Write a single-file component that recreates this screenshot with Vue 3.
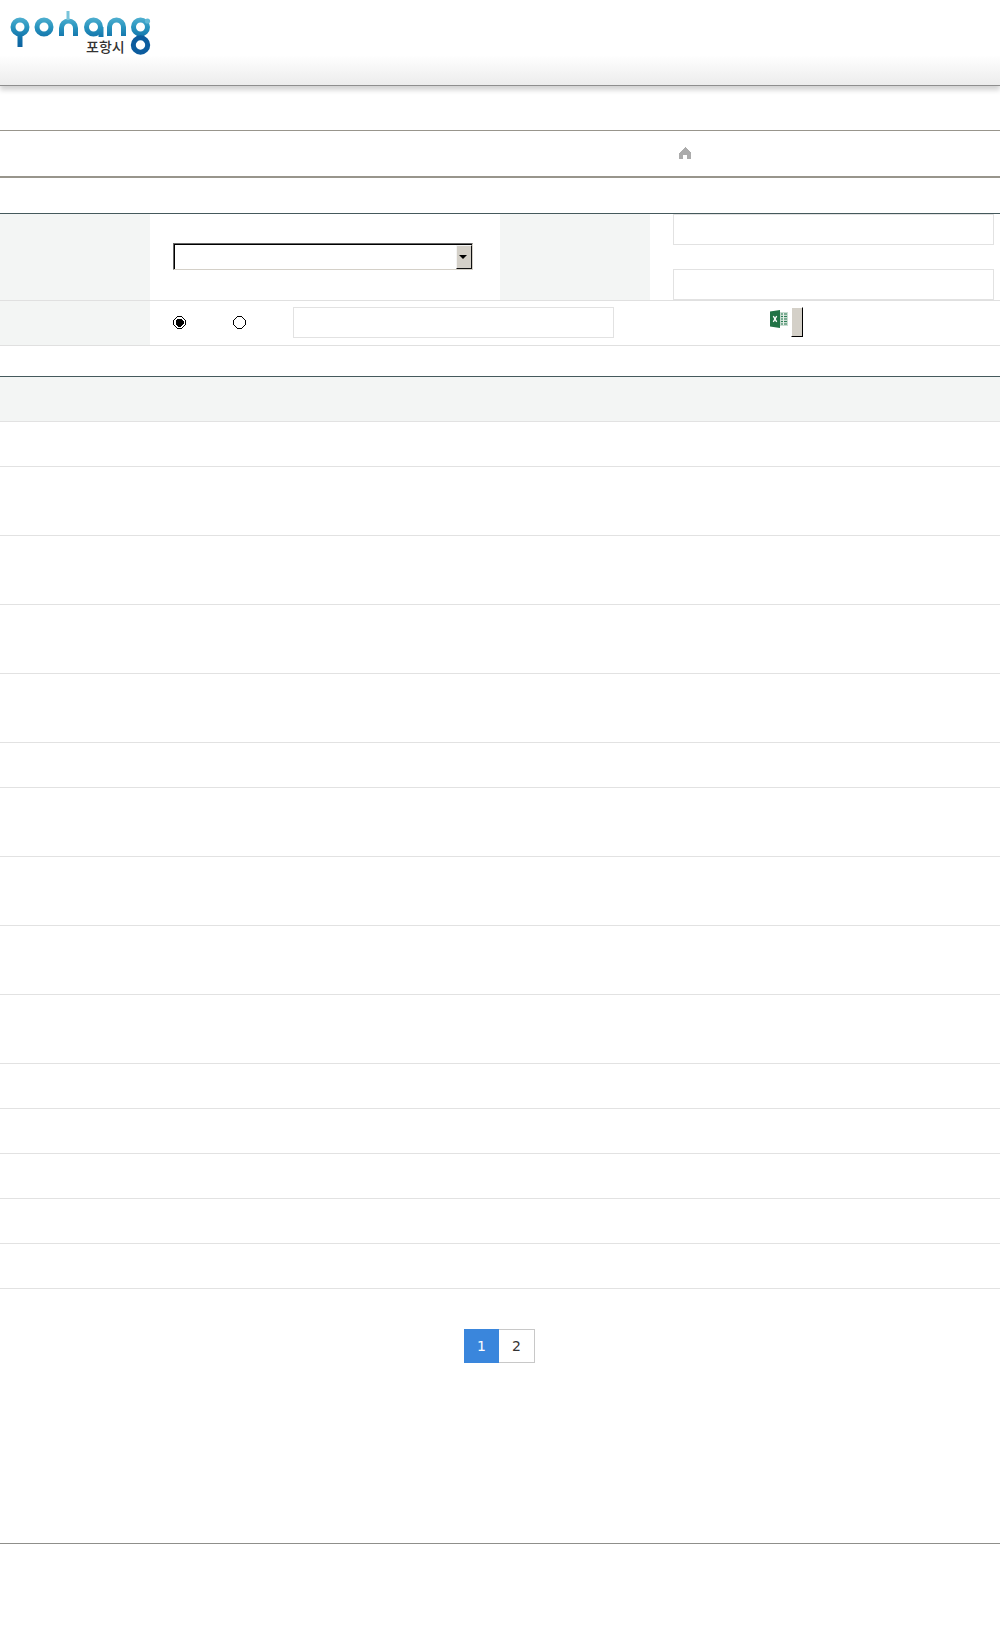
<script setup>
const rows = [45, 69, 69, 69, 69, 45, 69, 69, 69, 69, 45, 45, 45, 45, 45]
</script>

<template>
  <div class="page">
    <header class="header">
      <svg class="logo" width="155" height="60" viewBox="0 0 155 60" fill="none">
        <defs>
          <linearGradient id="lg" gradientUnits="userSpaceOnUse" x1="0" y1="14" x2="0" y2="56">
            <stop offset="0" stop-color="#5fb9d6" />
            <stop offset="0.3" stop-color="#2a96c0" />
            <stop offset="0.6" stop-color="#0f6fa8" />
            <stop offset="1" stop-color="#0a5598" />
          </linearGradient>
        </defs>
        <g stroke="url(#lg)" stroke-width="5">
          <circle cx="20" cy="27" r="7" />
          <path d="M20 33V47" />
          <circle cx="44" cy="27" r="7" />
          <path d="M61.5 36V28a7 7 0 0 1 14 0V36" />
          <path d="M68 11V20" stroke="#79c4da" stroke-width="3" />
          <circle cx="93.5" cy="27" r="7" />
          <path d="M101 27V37" />
          <path d="M109.5 36V27a7 7 0 0 1 14 0V36" />
          <circle cx="140.5" cy="27" r="7" />
          <circle cx="140.5" cy="45" r="7.2" stroke="#0c5c9e" />
        </g>
        <circle cx="147.5" cy="21" r="2.6" fill="#5fb9d6" />
      </svg>
      <span class="logo-ko">포항시</span>
    </header>

    <div class="band band-menu"></div>
    <div class="band band-crumb">
      <svg class="home" width="12" height="12" viewBox="0 0 12 12" shape-rendering="crispEdges">
        <path d="M6 0L12 6V12H8V8H4V12H0V6Z" fill="#ababab" />
      </svg>
    </div>
    <div class="band band-title"></div>

    <section class="search">
      <div class="search-top">
        <div class="label"></div>
        <div class="cell cell-select">
          <div class="select">
            <span class="select-btn"><i class="caret"></i></span>
          </div>
        </div>
        <div class="label"></div>
        <div class="cell cell-dates">
          <div class="field"></div>
          <div class="field"></div>
        </div>
      </div>
      <div class="search-bottom">
        <div class="label"></div>
        <div class="cell cell-keyword">
          <svg class="radio" width="13" height="13" viewBox="0 0 13 13" shape-rendering="crispEdges">
            <path d="M4.5 .5h4l4 4v4l-4 4h-4l-4-4v-4z" fill="#fff" stroke="#000" />
            <path d="M5 2.5h3l2.5 2.5v3L8 10.5H5L2.5 8V5z" fill="#000" />
          </svg>
          <svg class="radio" width="13" height="13" viewBox="0 0 13 13" shape-rendering="crispEdges">
            <path d="M4.5 .5h4l4 4v4l-4 4h-4l-4-4v-4z" fill="#fff" stroke="#000" />
          </svg>
          <div class="field keyword"></div>
          <svg class="excel" width="18" height="18" viewBox="0 0 18 18">
            <path d="M9 2h9v14H9z" fill="#c9dcd1" />
            <path d="M11 4h6M11 6.5h6M11 9h6M11 11.5h6M11 14h6" stroke="#2f7f57" stroke-width="1" />
            <path d="M13.5 3v12" stroke="#e8f0ea" stroke-width="1" />
            <path d="M0 1.5L10 0V18L0 16.5Z" fill="#217346" />
            <path d="M3.3 6.2L6.7 11.8M6.7 6.2L3.3 11.8" stroke="#fff" stroke-width="1.3" />
          </svg>
          <span class="btn"></span>
        </div>
      </div>
    </section>

    <div class="table">
      <div class="thead"></div>
      <div v-for="(h, i) in rows" :key="i" class="row" :style="{ height: h + 'px' }"></div>
    </div>

    <nav class="pager">
      <span class="pg active">1</span>
      <span class="pg">2</span>
    </nav>

    <footer class="footer"></footer>
  </div>
</template>

<style scoped>
.page {
  width: 1000px;
  height: 1644px;
  background: #fff;
  overflow: hidden;
  font-family: "DejaVu Sans", sans-serif;
}
.header {
  position: relative;
  height: 86px;
  box-sizing: border-box;
  border-bottom: 1px solid #8e8e8e;
  background: linear-gradient(#fff 55px, #ececec 85px);
  box-shadow: 0 4px 5px rgba(0, 0, 0, 0.18);
}
.logo { position: absolute; left: 0; top: 0; filter: blur(0.35px); }
.logo-ko {
  position: absolute;
  left: 86px;
  top: 38px;
  font: 500 14px/16px "Noto Sans CJK KR", sans-serif;
  color: #333;
}
.band { box-sizing: border-box; }
.band-menu { height: 45px; border-bottom: 1px solid #98958c; }
.band-crumb {
  height: 47px;
  border-bottom: 2px solid #98958c;
  position: relative;
}
.home { position: absolute; left: 679px; top: 16px; }
.band-title { height: 36px; border-bottom: 1px solid #45595c; }
.search-top {
  display: grid;
  grid-template-columns: 150px 350px 150px 350px;
  height: 87px;
  border-bottom: 1px solid #e0e0e0;
  box-sizing: border-box;
}
.label { background: #f3f5f4; }
.cell-select { padding: 29px 0 0 23px; }
.select {
  width: 300px;
  height: 27px;
  box-sizing: border-box;
  border: 1px solid;
  border-color: #666 #d4d0c8 #d4d0c8 #666;
  box-shadow: inset 1px 1px 0 #000;
  position: relative;
}
.select-btn {
  position: absolute;
  right: 0;
  top: 1px;
  width: 16px;
  height: 24px;
  background: #d4d0c8;
  border: 1px solid;
  border-color: #f4f4f4 #111 #111 #f4f4f4;
  box-sizing: border-box;
}
.caret {
  position: absolute;
  left: 2px;
  top: 9px;
  border: 4px solid transparent;
  border-top: 4px solid #000;
  border-bottom: 0;
}
.cell-dates {
  padding-left: 23px;
  display: flex;
  flex-direction: column;
  gap: 24px;
}
.field {
  width: 321px;
  height: 31px;
  border: 1px solid #e2e2e2;
  box-sizing: border-box;
  background: #fff;
}
.search-bottom {
  display: grid;
  grid-template-columns: 150px 850px;
  height: 45px;
  border-bottom: 1px solid #e0e0e0;
  box-sizing: border-box;
}
.cell-keyword {
  display: flex;
  align-items: center;
  padding: 0 0 1px 23px;
}
.radio { margin-right: 47px; flex: none; }
.keyword { margin-right: 156px; flex: none; }
.excel { margin-right: 3px; margin-top: -7px; flex: none; }
.btn {
  width: 12px;
  height: 30px;
  margin-top: -1px;
  box-sizing: border-box;
  background: #d4d0c8;
  border: 1px solid;
  border-color: #fff #000 #000 #fff;
}
.table { margin-top: 30px; border-top: 1px solid #45595c; }
.thead { height: 45px; background: #f3f5f4; border-bottom: 1px solid #e2e2e2; box-sizing: border-box; }
.row { border-bottom: 1px solid #e2e2e2; box-sizing: border-box; }
.pager { display: flex; justify-content: center; margin-top: 40px; padding-right: 1px; }
.pg {
  width: 36px;
  height: 34px;
  box-sizing: border-box;
  border: 1px solid #c8c8c8;
  border-left: 0;
  font-size: 14px;
  line-height: 32px;
  text-align: center;
  color: #333;
}
.pg.active {
  width: 35px;
  background: #3a86dc;
  border: 1px solid #3a86dc;
  color: #fff;
}
.footer {
  margin-top: 180px;
  border-top: 1px solid #8f8f8b;
}
</style>
